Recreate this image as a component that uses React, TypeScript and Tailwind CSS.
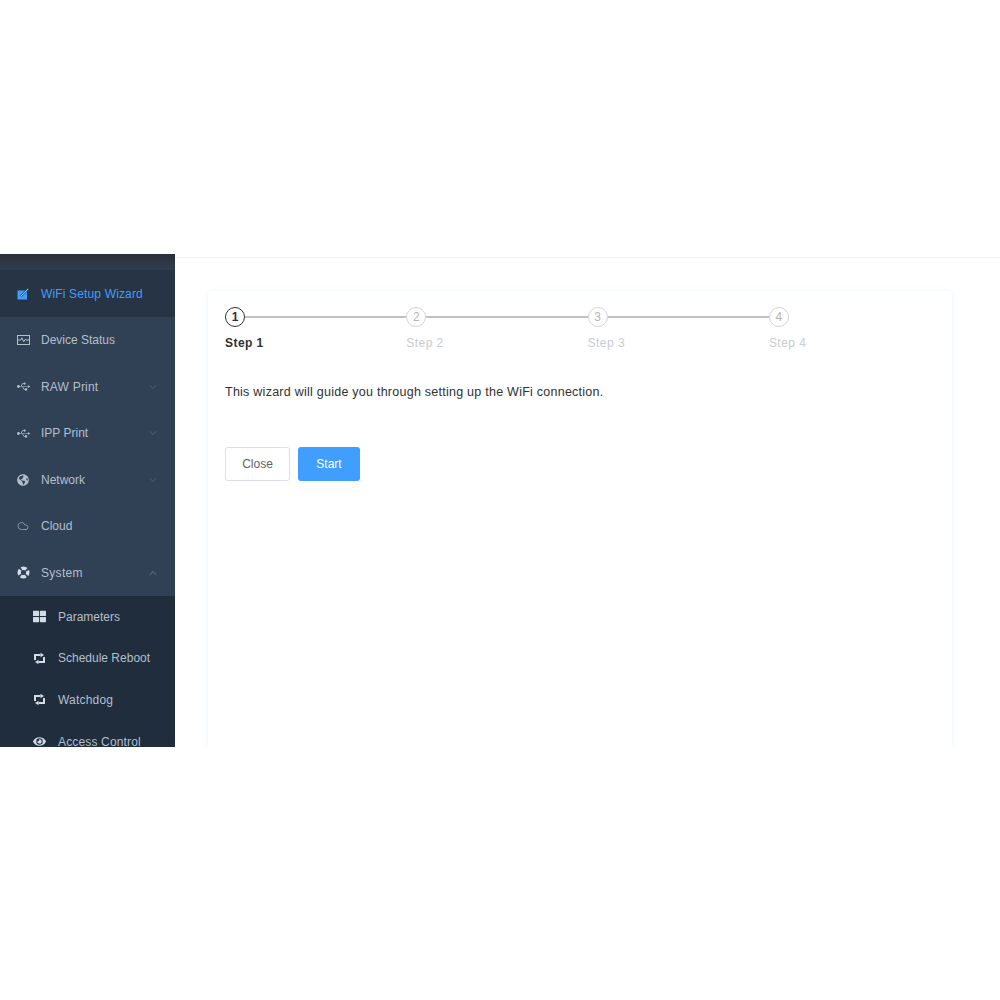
import type { ReactNode } from 'react';
import { ChevronDown, ChevronUp, Cloud } from 'lucide-react';
import { FaEye, FaGlobeAmericas, FaThLarge, FaUsb } from 'react-icons/fa';

const WizardIcon = () => (
  <svg width="12" height="12" viewBox="0 0 12 12" fill="none">
    <rect x="0.5" y="2.5" width="9.5" height="9" fill="#409eff" />
    <path d="M3.5 8.5 10 2" stroke="#263445" strokeWidth="2.4" />
    <path d="M3.5 8.5 11.2 0.8" stroke="#7fbcff" strokeWidth="1.1" />
  </svg>
);

const StatusIcon = () => (
  <svg width="13" height="12" viewBox="0 0 13 12" fill="none" stroke="#b4bfcc" strokeWidth="1">
    <rect x="0.5" y="1.5" width="12" height="9" />
    <path d="M0.5 6h3.2l1.2-2.2 1.8 4 1.5-2.4 0.8 0.6h3.5" />
  </svg>
);

const SystemIcon = () => (
  <svg width="13" height="13" viewBox="0 0 13 13" fill="none">
    <circle cx="6.5" cy="6.5" r="4.3" stroke="#d3dbe4" strokeWidth="3.4" strokeDasharray="5.2 1.55" strokeDashoffset="2.6" />
  </svg>
);

const RebootIcon = () => (
  <svg width="13" height="13" viewBox="0 0 13 13" fill="none">
    <path d="M2 8V3h5.5M11 5v5H5.5" stroke="#d3dbe4" strokeWidth="2" />
    <path d="M7.5 0.8l3.5 2.2-3.5 2.2zM5.5 7.8 2 10l3.5 2.2z" fill="#d3dbe4" />
  </svg>
);

function NavItem({ icon, label, chevron, active, tracking }: { icon: ReactNode; label: string; chevron?: 'up' | 'down'; active?: boolean; tracking?: string }) {
  return (
    <div className={`flex h-[46.5px] shrink-0 items-center pl-[17px] pr-[16px] pt-[1px] ${active ? 'bg-[#263445] text-[#409eff]' : 'text-[#b4bfcc]'}`}>
      <span className="flex w-[24px] shrink-0 items-center">{icon}</span>
      <span className={`text-[12px] ${tracking ?? ''}`}>{label}</span>
      {chevron === 'down' && <ChevronDown className="ml-auto text-[#5d6d80]" size={12} strokeWidth={1.25} />}
      {chevron === 'up' && <ChevronUp className="ml-auto text-[#8c99a8]" size={12} strokeWidth={1.25} />}
    </div>
  );
}

function SubItem({ icon, label, tracking }: { icon: ReactNode; label: string; tracking?: string }) {
  return (
    <div className="flex h-[41.6px] shrink-0 items-center pl-[33px] pt-[1px] text-[#b4bfcc]">
      <span className="flex w-[25px] shrink-0 items-center text-[#d3dbe4]">{icon}</span>
      <span className={`text-[12px] ${tracking ?? ''}`}>{label}</span>
    </div>
  );
}

function Step({ n, current, last }: { n: number; current?: boolean; last?: boolean }) {
  return (
    <div className={last ? 'flex-1' : 'w-[181.3px] shrink-0'}>
      <div className="flex items-center">
        <div
          className={`flex h-[20px] w-[20px] shrink-0 items-center justify-center rounded-full text-[12px] ${
            current ? 'border-[1.5px] border-[#303133] font-bold text-[#303133]' : 'border-[1.5px] border-[#d4d4d4] text-[#b4b4b4]'
          }`}
        >
          {n}
        </div>
        {!last && <div className="h-[2px] flex-1 bg-[#c0c0c0]" />}
      </div>
      <div className={`mt-[8px] text-[12px] leading-[16px] tracking-[0.45px] ${current ? 'font-bold text-[#303133]' : 'text-[#c9ccd2]'}`}>
        Step {n}
      </div>
    </div>
  );
}

export default function App() {
  return (
    <div className="h-[1000px] w-[1000px] overflow-hidden bg-white font-['Liberation_Sans',Arial,sans-serif]">
      <div className="h-[254px]" />
      <div className="flex h-[493px] overflow-hidden">
        <aside className="flex w-[175px] shrink-0 flex-col overflow-hidden bg-[#304156]">
          <div className="h-[16px] shrink-0 bg-gradient-to-b from-[#2a2f3a] to-[#2f3d4f]" />
          <NavItem active icon={<WizardIcon />} label="WiFi Setup Wizard" tracking="tracking-[0.15px]" />
          <NavItem icon={<StatusIcon />} label="Device Status" />
          <NavItem icon={<FaUsb size={13} />} label="RAW Print" chevron="down" tracking="tracking-[0.2px]" />
          <NavItem icon={<FaUsb size={13} />} label="IPP Print" chevron="down" />
          <NavItem icon={<FaGlobeAmericas size={12} />} label="Network" chevron="down" />
          <NavItem icon={<Cloud size={12} strokeWidth={1.25} />} label="Cloud" />
          <NavItem icon={<SystemIcon />} label="System" chevron="up" tracking="tracking-[0.3px]" />
          <div className="bg-[#1f2d3d]">
            <SubItem icon={<FaThLarge size={13} />} label="Parameters" />
            <SubItem icon={<RebootIcon />} label="Schedule Reboot" />
            <SubItem icon={<RebootIcon />} label="Watchdog" tracking="tracking-[0.2px]" />
            <SubItem icon={<FaEye size={13} />} label="Access Control" tracking="tracking-[0.15px]" />
          </div>
        </aside>
        <main className="flex min-w-0 flex-1 flex-col">
          <div className="h-[4px] shrink-0 border-b border-[#eff2f5]" />
          <div className="pl-[33px] pr-[48px] pt-[33px]">
            <div className="h-[600px] rounded-[4px] bg-white px-[17px] pt-[16px] shadow-[0_0_6px_rgba(64,158,255,0.1)]">
              <div className="flex">
                <Step n={1} current />
                <Step n={2} />
                <Step n={3} />
                <Step n={4} last />
              </div>
              <p className="mt-[33px] text-[12.5px] leading-[16px] tracking-[0.25px] text-[#303133]">
                This wizard will guide you through setting up the WiFi connection.
              </p>
              <div className="mt-[47px] flex gap-[8px]">
                <button className="h-[34px] w-[65px] rounded-[3px] border border-[#dcdfe6] bg-white text-[12px] text-[#606266]">
                  Close
                </button>
                <button className="h-[34px] w-[62px] rounded-[3px] bg-[#409eff] text-[12px] text-white">
                  Start
                </button>
              </div>
            </div>
          </div>
        </main>
      </div>
    </div>
  );
}
